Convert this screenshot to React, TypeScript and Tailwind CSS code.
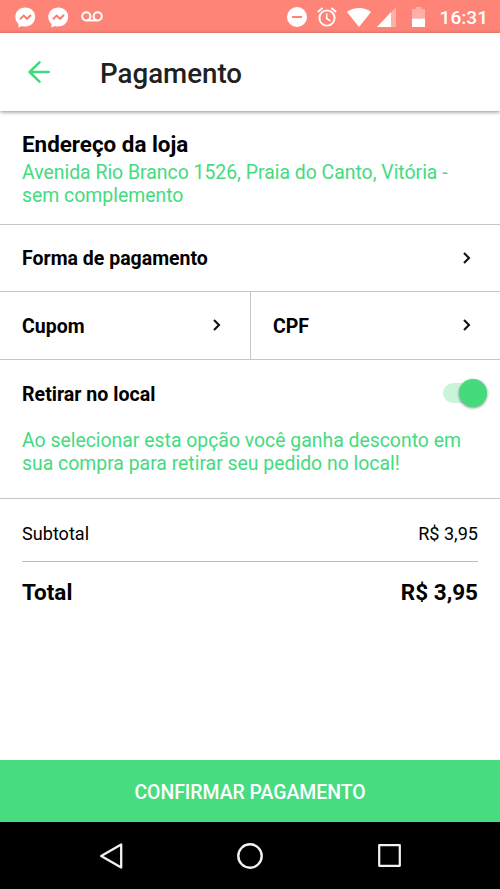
import { useState } from 'react'

export default function App() {
  const [pickup, setPickup] = useState(true)

  return (
    <div className="flex h-[889px] w-[500px] flex-col overflow-hidden bg-white font-[Roboto,sans-serif] text-black">
      <StatusBar />
      <header className="relative flex h-[78px] shrink-0 items-center bg-white pl-[28px] shadow-[0_1px_4px_rgba(0,0,0,0.45)]">
        <button aria-label="Voltar">
          <svg width="22" height="22" viewBox="0 0 22 22" fill="none" stroke="#3fdb7d" strokeWidth="2.5" strokeLinecap="round" strokeLinejoin="round">
            <path d="M11.5 1.3L1.6 11l9.9 9.7M1.6 11H20.7" />
          </svg>
        </button>
        <h1 className="ml-[50px] mt-[4px] text-[27.7px] font-medium leading-8 text-[#212121]">Pagamento</h1>
      </header>

      <main className="flex flex-1 flex-col">
        <section className="h-[114px] border-b border-[#c6c6c6] px-[22px] pt-[20px]">
          <h2 className="text-[22.4px] font-bold leading-[26px]">Endereço da loja</h2>
          <p className="mt-[4px] text-[19.4px] leading-[23px] text-[#44db7f]">
            Avenida Rio Branco 1526, Praia do Canto, Vitória -<br />sem complemento
          </p>
        </section>

        <Row label="Forma de pagamento" className="h-[67px]" />
        <div className="grid grid-cols-2">
          <Row label="Cupom" className="h-[68px]" />
          <Row label="CPF" className="h-[68px] border-l" />
        </div>

        <section className="h-[139px] border-b border-[#c6c6c6] pl-[22px] pr-[13px] pt-[18px]">
          <div className="flex h-[30px] items-center justify-between">
            <h2 className="pt-[3px] text-[19.6px] font-bold leading-[24px]">Retirar no local</h2>
            <Toggle checked={pickup} onChange={() => setPickup(!pickup)} />
          </div>
          <p className="mt-[21px] text-[19.4px] leading-[23px] text-[#44db7f]">
            Ao selecionar esta opção você ganha desconto em<br />sua compra para retirar seu pedido no local!
          </p>
        </section>

        <section className="px-[22px]">
          <div className="flex h-[63px] items-center justify-between border-b border-[#bcbcbc] pt-[8px] text-[18.1px]">
            <span>Subtotal</span>
            <span>R$ 3,95</span>
          </div>
          <div className="flex h-[62px] items-center justify-between text-[22.5px] font-bold">
            <span>Total</span>
            <span>R$ 3,95</span>
          </div>
        </section>
      </main>

      <button className="h-[62px] shrink-0 bg-[#48dc80] pt-[3px] text-[19.4px] font-medium text-white">
        CONFIRMAR PAGAMENTO
      </button>
      <NavBar />
    </div>
  )
}

function Row({ label, className }: { label: string; className: string }) {
  return (
    <button className={`flex items-center justify-between border-b border-[#c6c6c6] pl-[22px] pr-[29px] ${className}`}>
      <span className="pt-[2px] text-[19.5px] font-bold">{label}</span>
      <svg className="mb-px" width="8" height="12" viewBox="0 0 8 12" fill="none" stroke="#111" strokeWidth="2.1">
        <path d="M1 1l5 5-5 5" />
      </svg>
    </button>
  )
}

function Toggle({ checked, onChange }: { checked: boolean; onChange: () => void }) {
  return (
    <button role="switch" aria-checked={checked} onClick={onChange} className="flex h-7 w-11 items-center">
      <span className={`flex h-5 w-full items-center rounded-full ${checked ? 'justify-end bg-[#cbf5da]' : 'justify-start bg-gray-300'}`}>
        <span className={`size-7 rounded-full shadow-[0_1px_3px_rgba(0,0,0,0.45)] ${checked ? 'bg-[#44db7c]' : 'bg-gray-50'}`} />
      </span>
    </button>
  )
}

function Messenger() {
  return (
    <svg width="21" height="21" viewBox="0 0 21 21">
      <path fill="#fff" d="M10.3.4C4.7.4.3 4.5.3 9.8c0 3 1.2 5.4 3.2 7.1v3.5l3.3-1.4c1.1.4 2.3.6 3.5.6 5.6 0 9.900-4.300 9.900-9.800S15.900.4 10.300.4z" />
      <path fill="none" stroke="#f87f73" strokeWidth="2.1" d="M5 12.3l3.7-3.7 3.3 3.1 4-3.7" />
    </svg>
  )
}

function StatusBar() {
  return (
    <div className="flex h-[33px] shrink-0 items-center bg-[#ff8478] pl-[15px] pr-[12px] pt-px text-white">
      <Messenger />
      <div className="ml-[12px]">
        <Messenger />
      </div>
      <svg className="mb-px ml-[12px]" width="22" height="11" viewBox="0 0 22 11" fill="none" stroke="#fff" strokeWidth="2">
        <circle cx="5.3" cy="5.3" r="4.1" />
        <circle cx="16.7" cy="5.3" r="4.1" />
        <path d="M5.3 9.4h11.4" />
      </svg>

      <svg className="ml-auto" width="20" height="20" viewBox="0 0 20 20">
        <circle cx="10" cy="10" r="10" fill="#fff" />
        <path stroke="#ff8478" strokeWidth="2" d="M5 10h10" />
      </svg>
      <svg className="ml-[10px]" width="20" height="20" viewBox="0 0 20 20" fill="none" stroke="#fff" strokeWidth="1.9">
        <circle cx="10" cy="11" r="7.6" />
        <path d="M.8 4.9L5.5 1M19.2 4.9L14.5 1" />
        <path strokeWidth="1.5" d="M9.7 6.5v5l3.7 2.4" />
      </svg>
      <svg className="ml-[10px]" width="24" height="19" viewBox="0 0 24 19">
        <path fill="#fff" d="M0 4C3.5 1.4 7.5 0 12 0s8.5 1.4 12 4L12 19z" />
      </svg>
      <svg className="ml-[6px]" width="19" height="20" viewBox="0 0 19 20">
        <path fill="#fff" fillOpacity=".35" d="M19 0v20H0z" />
        <path fill="#fff" d="M14 5.3V20H0z" />
      </svg>
      <svg className="ml-[16px]" width="13" height="20" viewBox="0 0 13 20">
        <path fill="#fff" fillOpacity=".35" d="M0 2h3.5V0h6v2H13v9.5H0z" />
        <path fill="#fff" d="M0 11.5h13V20H0z" />
      </svg>
      <span className="ml-[15px] mt-[2px] text-[19.1px] font-medium">16:31</span>
    </div>
  )
}

function NavBar() {
  return (
    <nav className="flex h-[67px] shrink-0 items-center justify-between bg-black px-[99px]">
      <svg width="25" height="28" viewBox="0 0 25 28" fill="none" stroke="#f2f2f2" strokeWidth="2.3" strokeLinejoin="round">
        <path d="M22.2 2.5v23L2.2 14z" />
      </svg>
      <svg className="mr-[2px]" width="26" height="26" viewBox="0 0 26 26" fill="none" stroke="#f2f2f2" strokeWidth="2.4">
        <circle cx="13" cy="13" r="11.7" />
      </svg>
      <svg width="23" height="23" viewBox="0 0 23 23" fill="none" stroke="#f2f2f2" strokeWidth="2.2" strokeLinejoin="round">
        <path d="M1.2 1.2h20.6v20.6H1.2z" />
      </svg>
    </nav>
  )
}
